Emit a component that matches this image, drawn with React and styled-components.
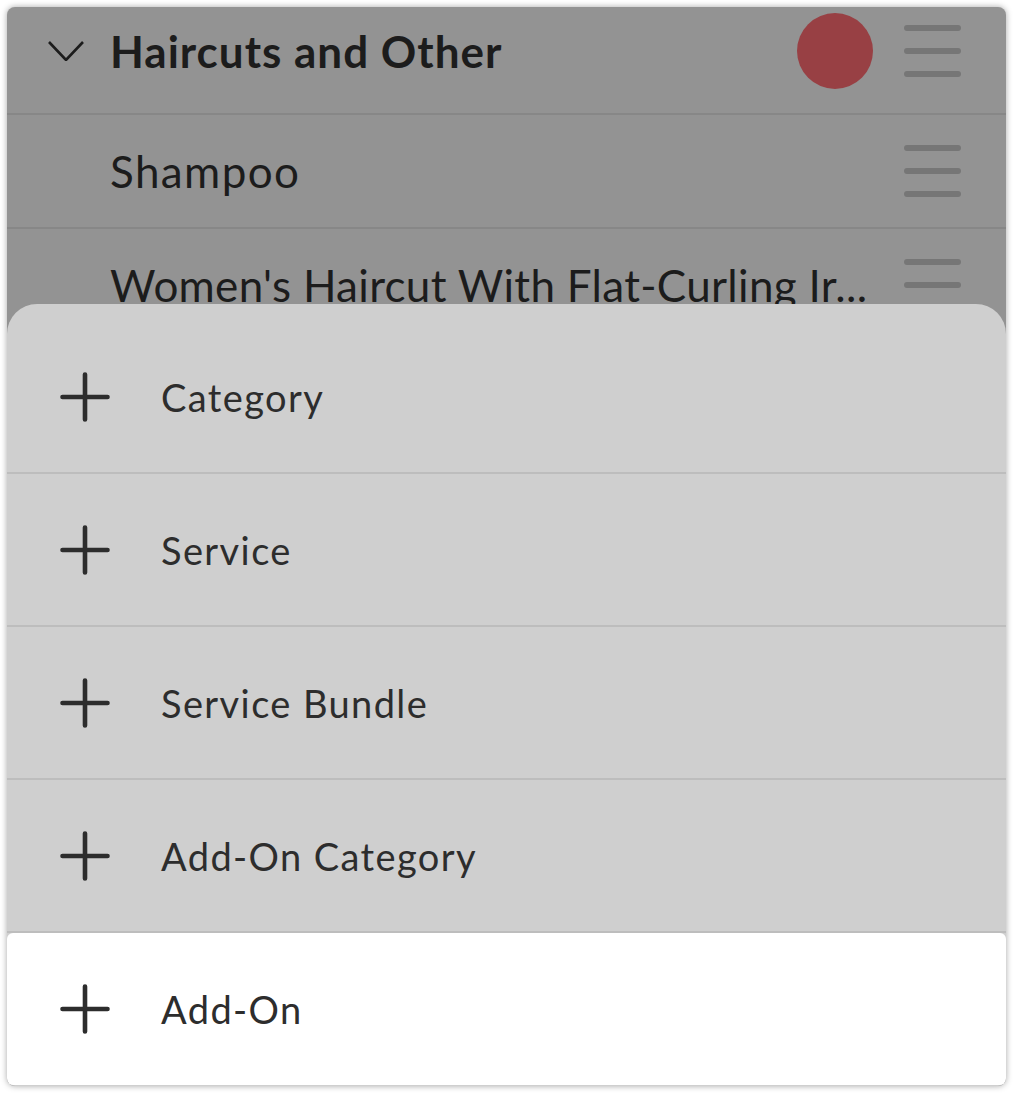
import styled, { createGlobalStyle } from 'styled-components'

const Global = createGlobalStyle`
  body {
    margin: 0;
    background: #ffffff;
    font-family: "Lato", "Liberation Sans", sans-serif;
  }
`

const Card = styled.div`
  position: relative;
  margin: 7px;
  width: 999px;
  height: 1079px;
  border-radius: 8px;
  overflow: hidden;
  background: #939393;
  box-shadow: 0 0 6px rgba(0, 0, 0, 0.35);
`

const Row = styled.div`
  display: flex;
  align-items: center;
  box-sizing: content-box;
  height: ${p => p.h}px;
  padding: 0 45px ${p => p.pb || 0}px 41px;
  border-bottom: 2px solid #878787;
`

const Chevron = styled.div`
  width: 62px;
  display: flex;
  align-items: center;
`

const Spacer = styled.div`
  width: 62px;
  flex-shrink: 0;
`

const Name = styled.div`
  flex: 1;
  min-width: 0;
  font-size: 44px;
  font-weight: ${p => (p.bold ? 700 : 400)};
  color: #1c1c1c;
  white-space: nowrap;
  margin-right: 30px;
  letter-spacing: ${p => p.ls ?? 1.4}px;
`

const Dot = styled.div`
  width: 76px;
  height: 76px;
  border-radius: 50%;
  background: #984044;
  margin-right: 31px;
  flex-shrink: 0;
`

const Handle = styled.div`
  width: 57px;
  display: flex;
  flex-direction: column;
  gap: 17px;
  flex-shrink: 0;
  span {
    display: block;
    height: 6px;
    border-radius: 3px;
    background: #767676;
  }
`

const Sheet = styled.div`
  position: absolute;
  left: 0;
  right: 0;
  bottom: 0;
  height: 782px;
  padding-top: 17px;
  box-sizing: border-box;
  background: #cfcfcf;
  border-radius: 30px 30px 0 0;
`

const Item = styled.div`
  display: flex;
  align-items: center;
  height: ${p => (p.active ? 152 : 151)}px;
  padding-left: 53px;
  background: ${p => (p.active ? '#ffffff' : 'transparent')};
  border-bottom: ${p => (p.active ? 'none' : '2px solid #bdbdbd')};
  border-radius: ${p => (p.active ? '6px' : '0')};
`

const Label = styled.span`
  margin-left: 51px;
  font-size: 38px;
  color: #2d2d2d;
  letter-spacing: 1.4px;
`

const Plus = () => (
  <svg width="50" height="50" viewBox="0 0 50 50">
    <path d="M25 2.5v45M2.5 25h45" stroke="#2d2d2d" strokeWidth="4.6" strokeLinecap="round" />
  </svg>
)

const Lines = ({ count = 3 }) => (
  <Handle>
    {Array.from({ length: count }).map((_, i) => (
      <span key={i} />
    ))}
  </Handle>
)

const items = ['Category', 'Service', 'Service Bundle', 'Add-On Category', 'Add-On']

export default function App() {
  return (
    <>
      <Global />
      <Card>
        <Row h={88} pb={18}>
          <Chevron>
            <svg width="36" height="20" viewBox="0 0 36 20">
              <path d="M1 1l17 18L35 1" fill="none" stroke="#1c1c1c" strokeWidth="2.6" />
            </svg>
          </Chevron>
          <Name bold ls={1.0}>Haircuts and Other</Name>
          <Dot />
          <Lines />
        </Row>
        <Row h={112}>
          <Spacer />
          <Name>Shampoo</Name>
          <Lines />
        </Row>
        <Row h={112}>
          <Spacer />
          <Name ls={0.3}>Women's Haircut With Flat-Curling Ir...</Name>
          <Lines />
        </Row>
        <Sheet>
          {items.map((t, i) => (
            <Item key={t} active={i === items.length - 1}>
              <Plus />
              <Label>{t}</Label>
            </Item>
          ))}
        </Sheet>
      </Card>
    </>
  )
}
